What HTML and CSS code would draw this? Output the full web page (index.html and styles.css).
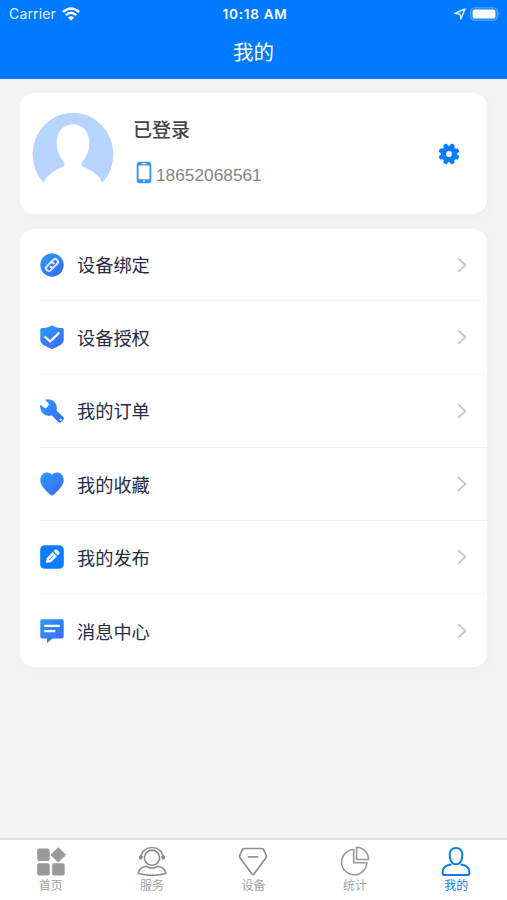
FILE: index.html
```html
<!DOCTYPE html>
<html lang="zh-CN">
<head>
<meta charset="utf-8">
<title>我的</title>
<link rel="stylesheet" href="styles.css">
</head>
<body>
<svg class="defs" width="0" height="0">
  <defs>
    <linearGradient id="blue" x1="0" y1="0" x2="1" y2="1"><stop offset="0" stop-color="#2c9cf8"/><stop offset="1" stop-color="#3b66f5"/></linearGradient>
    <symbol id="chevron" viewBox="0 0 10 16"><path d="M1 1.2 8.4 8 1 14.8" fill="none" stroke="#c3c3c5" stroke-width="1.7"/></symbol>
    <path id="tooth" d="M-2.700-7 -1.800-10.300Q0-11 1.800-10.300L2.700-7V7L1.800 10.300Q0 11-1.800 10.300L-2.700 7Z"/>
  </defs>
</svg>
<div class="screen">
  <header class="header">
    <div class="status">
      <div class="carrier"><span>Carrier</span>
        <svg width="18" height="14" viewBox="0 0 18 14"><g fill="none" stroke="#fff" stroke-width="2.5"><path d="M.9 5Q9-2.1 17.1 5"/><path d="M3.8 8.1Q9 3.5 14.2 8.1"/></g><path d="M5.9 10.5Q9 7.8 12.1 10.5L9 13.7Z" fill="#fff"/></svg>
      </div>
      <time class="time">10:18 AM</time>
      <div class="power">
        <svg width="12" height="12" viewBox="0 0 12 12"><path d="M.9 5.4 11 1 6.8 11.1 6.1 6.1Z" fill="none" stroke="#e2f0ff" stroke-width="1.4" stroke-linejoin="round"/></svg>
        <svg width="31" height="14" viewBox="0 0 31 14"><rect x=".7" y=".7" width="26.6" height="12.6" rx="3.8" fill="#1785ff" stroke="#5aa9ff" stroke-width="1.1"/><rect x="2.6" y="2.4" width="22.8" height="9.2" rx="2.2" fill="#fff"/><path d="M28.6 4.6q1.8 2.4 0 4.8z" fill="#70b5ff"/></svg>
      </div>
    </div>
    <h1 class="title">我的</h1>
  </header>
  <main class="content">
    <section class="card profile">
      <svg class="avatar" width="82" height="72" viewBox="0 0 82 70" preserveAspectRatio="none"><path d="M11.5 67.8A40.4 40.4 0 1 1 70.5 67.8C67 60.5 58 54.7 51.5 52.6 49 51.3 49 48.5 51 46.5 55 42 57.3 36.5 57.3 30 58.5 4.500 23.500 4.500 24.700 30 24.700 36.500 27 42 31 46.500 33 48.500 33 51.300 30.500 52.600 24 54.700 15 60.500 11.500 67.800Z" fill="#b7d4ff"/></svg>
      <div class="account">
        <div class="login">已登录</div>
        <div class="phone">
          <svg width="16" height="23" viewBox="0 0 16 23"><rect x=".7" y=".8" width="14.6" height="21.4" rx="3" fill="#3296fa"/><rect x="2.6" y="4.6" width="10.8" height="13.6" rx=".7" fill="#fff"/><path d="M5.8 2.7h4.4M6.900 20.200h2.200" stroke="#fff" stroke-width="1.300"/></svg>
          <span>18652068561</span>
        </div>
      </div>
      <svg class="gear" width="22" height="22" viewBox="-11 -11 22 22"><g fill="#0a7cff"><circle r="8.2"/><use href="#tooth" transform="rotate(22.5)"/><use href="#tooth" transform="rotate(67.5)"/><use href="#tooth" transform="rotate(112.5)"/><use href="#tooth" transform="rotate(157.5)"/></g><circle r="2.9" fill="#fff"/></svg>
    </section>
    <nav class="card menu">
      <a class="row"><svg class="icon" viewBox="0 0 24 24"><circle cx="12" cy="12" r="11.700" fill="url(#blue)"/><g transform="rotate(-45 12 12)" fill="none" stroke="#d8eaff" stroke-width="2"><path d="M11.300 14.800H7.500a2.800 2.800 0 0 1 0-5.600h4a2.800 2.800 0 0 1 2.700 3.600"/><path d="M12.700 9.200h3.800a2.800 2.800 0 0 1 0 5.600h-4a2.800 2.800 0 0 1-2.700-3.600"/></g></svg><span>设备绑定</span><svg class="chevron"><use href="#chevron"/></svg></a>
      <a class="row faint"><svg class="icon" viewBox="0 0 24 24"><path d="M12 .2C15.8 2.5 19 3 22.4 3.1q1.3.1 1.3 1.3V15c0 4.200-6.200 7-11.700 8.900C6.500 22 .3 19.200.3 15V4.400Q.3 3.200 1.600 3.100C5 3 8.200 2.500 12 .2Z" fill="url(#blue)"/><path d="m4.600 11.500 5.500 5 9.200-9" fill="none" stroke="#fff" stroke-width="2.200"/></svg><span>设备授权</span><svg class="chevron"><use href="#chevron"/></svg></a>
      <a class="row"><svg class="icon" viewBox="0 0 24 24"><path d="M5 .8C11-1.500 18.500 3.500 16.500 11.500L23.300 18.200Q24.500 19.500 23.300 20.800L20.800 23.300Q19.500 24.300 18.200 23.100L11.800 16.200C5 18.500-.8 13 .3 5.500L4.500 8.900Q5.500 9.500 6.500 8.700L8.500 6.500Q9.200 5.500 8.500 4.500Z" fill="url(#blue)"/><circle cx="20.700" cy="20.600" r="1.200" fill="#dce9ff"/></svg><span>我的订单</span><svg class="chevron"><use href="#chevron"/></svg></a>
      <a class="row"><svg class="icon" viewBox="0 0 24 24"><path d="M12 2.700C16-1.500 23.700.5 23.700 8 23.700 14.500 16.500 20 13 23.200Q12 24 11 23.200C7.500 20 .3 14.500.3 8 .3.5 8-1.500 12 2.700Z" fill="url(#blue)"/></svg><span>我的收藏</span><svg class="chevron"><use href="#chevron"/></svg></a>
      <a class="row faint"><svg class="icon" viewBox="0 0 24 24"><rect x=".2" y=".2" width="23.600" height="23.600" rx="4.500" fill="#0a7cff"/><g transform="rotate(45 12 12)" fill="#fff"><path d="M9 8h6v8.600L12 20.500 9 16.600ZM9 6.800V4.900q0-1.600 1.600-1.600h2.800q1.600 0 1.600 1.600v1.900Z"/><path d="M12 10v6" stroke="#4b9fff"/></g></svg><span>我的发布</span><svg class="chevron"><use href="#chevron"/></svg></a>
      <a class="row"><svg class="icon" viewBox="0 0 24 24"><path d="M2 .3h20q1.700 0 1.700 1.700v15.700q0 1.700-1.700 1.700H12.500L7 24V19.400H2Q.3 19.400.3 17.700V2Q.3.3 2 .3Z" fill="url(#blue)"/><path d="M4.300 6.800h15.500M4.300 12.200h11" stroke="#fff" stroke-width="2.200"/></svg><span>消息中心</span><svg class="chevron"><use href="#chevron"/></svg></a>
    </nav>
  </main>
  <nav class="tabs">
    <a class="tab"><svg viewBox="0 0 30 30" fill="#999"><rect x="1.200" y="2.600" width="12.500" height="12.500" rx="2"/><rect x="1.200" y="17.200" width="12.500" height="12.200" rx="2"/><rect x="16.200" y="17.200" width="12.500" height="12.200" rx="2"/><rect x="16.800" y="3.400" width="11" height="11" rx="1.200" transform="rotate(45 22.300 8.900)"/></svg><span>首页</span></a>
    <a class="tab"><svg viewBox="0 0 30 30" fill="none" stroke="#8e8e8e" stroke-width="1.600"><circle cx="15" cy="11.700" r="7.600"/><path d="M3.700 12C4.500-2 25.500-2 26.300 12"/><path d="M3.600 9.500q-2 3 .4 3.500 1.200-1 1.200-3M26.400 9.500q2 3-.4 3.500-1.200-1-1.200-3" fill="#8e8e8e"/><path d="M9 20.200C4 21.300 1.300 24 1.300 27.500 10 29.700 20 29.700 28.700 27.500 28.700 24 26 21.300 21 20.200 17 22.700 13 22.700 9 20.200Z"/></svg><span>服务</span></a>
    <a class="tab"><svg viewBox="0 0 30 30" fill="none" stroke="#8e8e8e" stroke-width="1.700"><path d="M6 2.500H24Q25 2.500 25.500 3.300L28.300 9.500Q28.500 11 27.800 12L16 28Q15 29.200 14 28L2.200 12Q1.500 11 1.700 9.500L4.500 3.300Q5 2.500 6 2.500Z"/><path d="M9.800 10.900h10.400"/></svg><span>设备</span></a>
    <a class="tab"><svg viewBox="0 0 30 30" fill="none" stroke="#999" stroke-width="1.600"><path d="M13.700 3.500A12.600 12.600 0 1 0 26.800 16.700H13.700Z"/><path d="M16.600 1.300V13.500H28.500C28.300 6.500 23.500 1.700 16.600 1.300Z"/></svg><span>统计</span></a>
    <a class="tab active"><svg viewBox="0 0 30 30" fill="none" stroke="#087bf5" stroke-width="2"><path d="M8.700 8.500C8.700-.2 21.300-.2 21.300 8.500 21.300 12 20 16 17.800 17.600Q15 19 12.200 17.600C10 16 8.700 12 8.700 8.500Z"/><path d="M10.500 18.600C4 19.500 1.600 21.500 1.600 26.800Q1.600 29 3.300 29H26.700Q28.400 29 28.400 26.800C28.400 21.500 26 19.500 19.500 18.600"/></svg><span>我的</span></a>
  </nav>
</div>
</body>
</html>
```

FILE: styles.css
```css
* { box-sizing: border-box; }
body {
  margin: 0;
  background: #f3f3f3;
  font-family: Inter, "Noto Sans CJK SC", sans-serif;
}
svg { display: block; flex: none; }
.defs { position: absolute; }
.screen { display: flex; flex-direction: column; height: 900px; }

.header { height: 79px; background: #007aff; color: #fff; }
.status {
  display: grid;
  grid-template-columns: 1fr auto 1fr;
  align-items: center;
  height: 27px;
  padding: 0 6px 0 9px;
}
.carrier, .power { display: flex; align-items: center; }
.carrier { gap: 6px; color: #e4f1ff; font-size: 14px; letter-spacing: .15px; }
.time { font-weight: 600; font-size: 13.5px; letter-spacing: .75px; }
.power { justify-content: flex-end; gap: 4px; }
.title {
  margin: 0;
  font-size: 20.5px;
  font-weight: 400;
  line-height: 51px;
  text-align: center;
}

.content { flex: 1; padding: 14px 20px 0; }
.card { background: #fff; border-radius: 14px; box-shadow: 3px 4px 10px rgba(0, 0, 0, .02); }
.profile {
  display: flex;
  align-items: flex-start;
  height: 121px;
  margin-bottom: 15px;
  padding: 20px 27px 0 12px;
}
.account { flex: 1; margin-left: 19px; }
.login { color: #444; font-size: 19px; font-weight: 500; line-height: 36px; }
.phone {
  display: flex;
  align-items: center;
  gap: 4px;
  height: 24px;
  margin: 14px 0 0 3px;
  color: #858585;
  font-family: "Liberation Sans", sans-serif;
  font-size: 17.3px;
}
.phone svg { margin-top: -6px; }
.phone span { line-height: 24px; }
.gear { margin-top: 30px; }

.menu { height: 438px; padding-left: 20px; }
.row {
  display: flex;
  align-items: center;
  height: 73.3px;
  padding-right: 20px;
  border-bottom: 1px solid #f1f1f3;
  color: #252b48;
  font-size: 18.2px;
}
.row:first-child { height: 72.3px; margin-right: 5px; padding-right: 15px; }
.row:last-child { border-bottom: 0; }
.faint { border-bottom-color: #f9f9fa; }
.icon { width: 24px; height: 24px; margin-right: 13px; }
.row span { flex: 1; margin-top: -1px; }
.chevron { width: 10px; height: 16px; }

.tabs {
  display: grid;
  grid-template-columns: repeat(5, 1fr);
  height: 62px;
  background: #fff;
  border-top: 2px solid #dedede;
}
.tab {
  display: flex;
  flex-direction: column;
  align-items: center;
  padding-top: 6px;
  color: #a3a3a3;
  font-size: 12px;
  line-height: 19px;
}
.tab svg { width: 30px; height: 30px; }
.active { color: #087bf5; }
```
